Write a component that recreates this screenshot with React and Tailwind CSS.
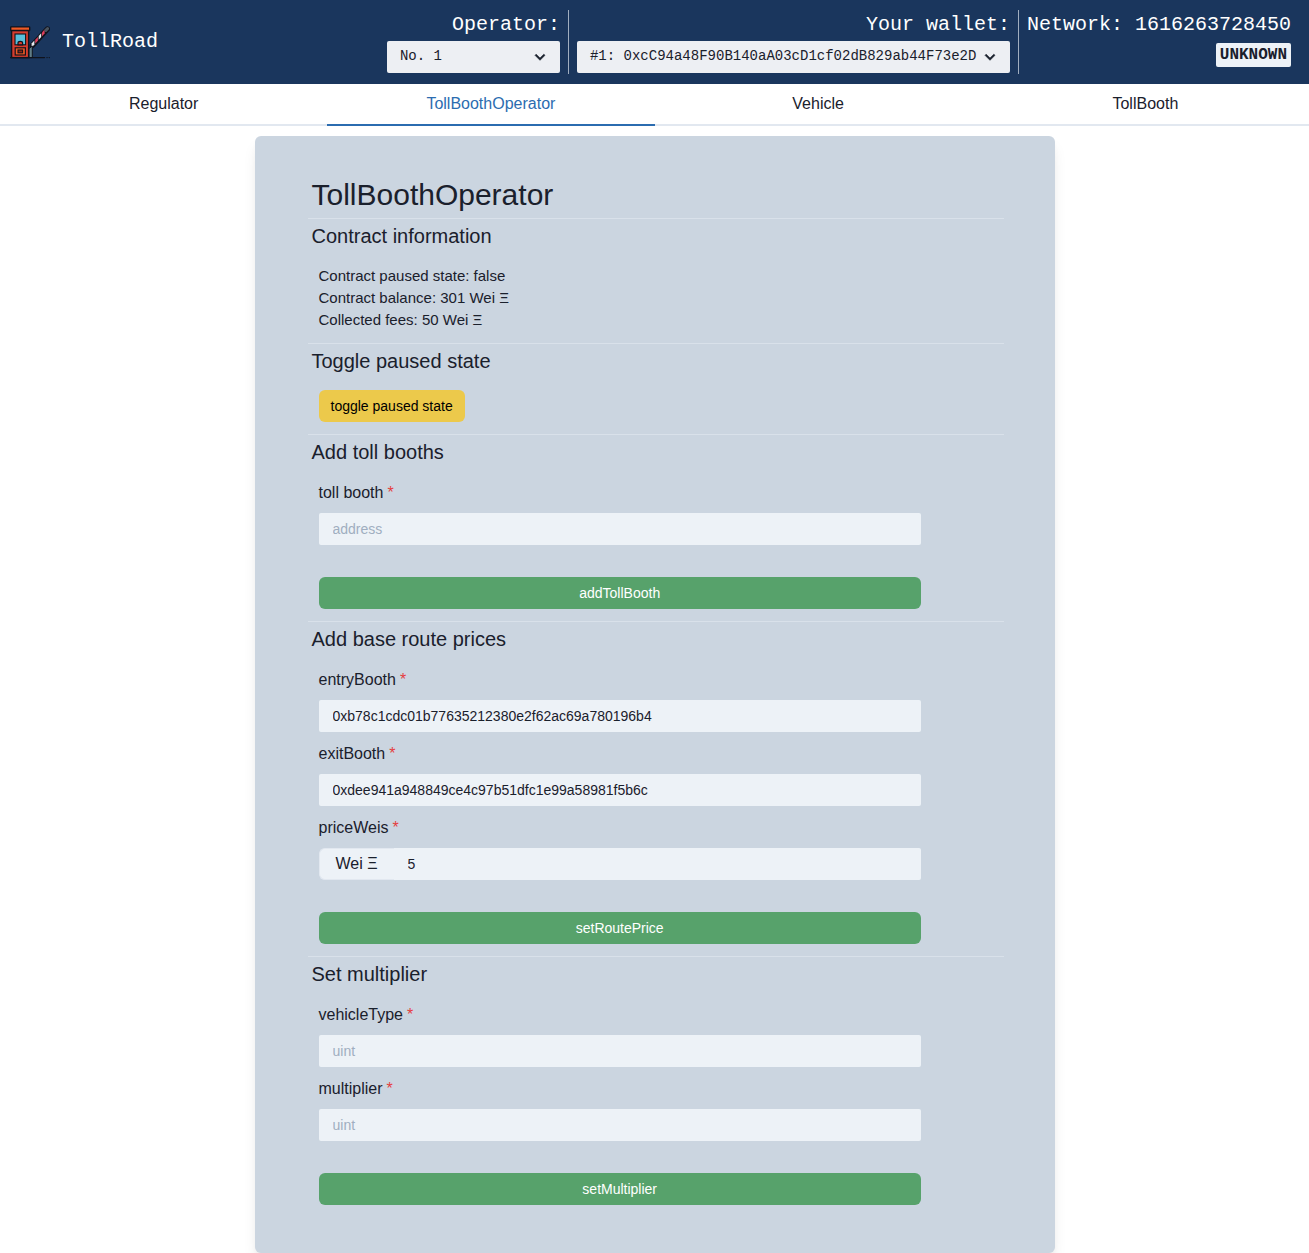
import React from "react";

function Logo() {
  return (
    <svg width="40" height="40" viewBox="0 0 40 40" className="-mt-1 block shrink-0">
      <path d="M22.4 25.4L37.4 9" stroke="#10131c" strokeWidth="5.4" strokeLinecap="round" />
      <path d="M21.6 23.6L24.4 20.6V24.4L21.6 27.4Z" fill="#e8eaf0" />
      <path d="M25.2 19.8L27.9 16.9V20.7L25.2 23.6Z" fill="#e0405e" />
      <path d="M28.7 16L31.2 13.3V17.1L28.7 19.8Z" fill="#e8eaf0" />
      <path d="M32 12.4L34.6 9.6V13.4L32 16.2Z" fill="#e0405e" />
      <path d="M35.8 10.4L37.6 8.6" stroke="#4a545f" strokeWidth="3" strokeLinecap="round" />
      <path d="M18.9 37.6V28.6L22.3 26V37.6Z" fill="#607d86" stroke="#10131c" strokeWidth="1" />
      <rect x="1.6" y="10.4" width="17" height="27.2" fill="#d63d2e" stroke="#10131c" strokeWidth="1.4" />
      <rect x="0.7" y="6.9" width="19" height="3.6" rx="0.6" fill="#f05a24" stroke="#10131c" strokeWidth="1.4" />
      <rect x="5" y="14" width="10.6" height="10.8" fill="#57bfdb" stroke="#10131c" strokeWidth="1.1" />
      <path d="M8 24.8V23Q8 21.4 10.3 21.4Q12.6 21.4 12.6 23V24.8Z" fill="#d63d2e" stroke="#10131c" strokeWidth="1.2" />
      <rect x="5.2" y="27.8" width="10.2" height="7.2" fill="#f05a24" stroke="#10131c" strokeWidth="1.2" />
      <rect x="8" y="30" width="4.6" height="2.8" fill="#8c2719" stroke="#10131c" strokeWidth="1.1" />
      <path d="M0.6 37.6H34.5M37 37.6H37.1M39.2 37.6H39.3" stroke="#10131c" strokeWidth="1.4" strokeLinecap="round" />
    </svg>
  );
}

function Select({ children, className }) {
  return (
    <div className={`flex h-8 items-center justify-between rounded-[2px] bg-[#edeff3] pl-[13px] pr-[10px] text-[14px] leading-5 text-[#1a202c] ${className}`}>
      <span className="-mt-0.5 whitespace-nowrap">{children}</span>
      <svg width="20" height="20" viewBox="0 0 24 24" className="-ml-2 shrink-0 fill-current">
        <path d="M16.59 8.59L12 13.17 7.41 8.59 6 10l6 6 6-6z" stroke="currentColor" strokeWidth="0.7" />
      </svg>
    </div>
  );
}

function Section({ title, children }) {
  return (
    <section className="border-t border-[#d9e1ea]">
      <h2 className="h-[34px] px-1 text-[20px] leading-[34px]">{title}</h2>
      <div className="py-3 pl-[11px]">{children}</div>
    </section>
  );
}

function Field({ label, placeholder, value, unit }) {
  return (
    <div>
      <label className="mb-2 block leading-6">
        {label}
        <span className="ml-1 text-[#e53e3e]">*</span>
      </label>
      <div className="flex h-8">
        {unit && (
          <span className="flex w-[75px] shrink-0 items-center whitespace-nowrap rounded-l-md border border-r-0 border-[#e2e8f0] bg-[#edf2f7] pl-4 leading-6">{unit}</span>
        )}
        <input
          className={`h-8 min-w-0 flex-1 bg-[#edf2f7] pl-[14px] text-[14px] placeholder-[#a0aec0] outline-none ${unit ? "rounded-r-[2px]" : "rounded-[2px]"}`}
          placeholder={placeholder}
          defaultValue={value}
        />
      </div>
    </div>
  );
}

function Form({ fields, action }) {
  return (
    <div className="w-[602.4px]">
      <div className="mb-8 flex flex-col gap-[10px]">
        {fields.map((f) => (
          <Field key={f.label} {...f} />
        ))}
      </div>
      <button className="block h-8 w-full rounded-md bg-[#57a26b] text-[14px] text-white">{action}</button>
    </div>
  );
}

const tabs = ["Regulator", "TollBoothOperator", "Vehicle", "TollBooth"];

export default function App() {
  return (
    <div className="bg-white font-['Liberation_Sans',sans-serif] text-[16px] leading-6 text-[#1a202c]">
      <header className="flex h-[84px] justify-between bg-[#1a365d] p-[10px] font-['Liberation_Mono',monospace] text-[20px] text-white">
        <div className="flex items-center gap-3">
          <Logo />
          <span className="leading-[30px]">TollRoad</span>
        </div>
        <div className="flex text-right leading-[30px]">
          <div className="border-r border-[#a0aec0] pr-2">
            <div className="mb-px">Operator:</div>
            <Select className="w-[173px]">No. 1</Select>
          </div>
          <div className="border-r border-[#a0aec0] px-2">
            <div className="mb-px">Your wallet:</div>
            <Select className="w-[433px]">#1: 0xcC94a48F90B140aA03cD1cf02dB829ab44F73e2D</Select>
          </div>
          <div className="flex flex-col items-end px-2">
            <div className="mb-[3px]">Network: 1616263728450</div>
            <span className="h-6 rounded-[2px] bg-[#edf2f7] px-1 text-[16px] font-bold leading-6 text-[#1a202c]">UNKNOWN</span>
          </div>
        </div>
      </header>
      <nav className="grid h-[42px] grid-cols-4 text-center">
        {tabs.map((t) => (
          <div key={t} className={`border-b-2 pt-2 ${t === "TollBoothOperator" ? "border-[#2b6cb0] text-[#2b6cb0]" : "border-[#e2e8f0]"}`}>
            {t}
          </div>
        ))}
      </nav>
      <main className="mx-auto mt-[10px] w-[800px] rounded-md bg-[#cbd5e0] pb-9 pl-[53px] pr-[51px] pt-9 shadow-[0_10px_15px_-3px_rgba(0,0,0,0.1),0_4px_6px_-2px_rgba(0,0,0,0.05)]">
        <h1 className="h-[46px] px-1 text-[30px] leading-[46px]">TollBoothOperator</h1>
        <Section title="Contract information">
          <div className="text-[15px] leading-[22px]">
            <p>Contract paused state: false</p>
            <p>Contract balance: 301 Wei Ξ</p>
            <p>Collected fees: 50 Wei Ξ</p>
          </div>
        </Section>
        <Section title="Toggle paused state">
          <button className="block h-8 rounded-md bg-[#ecc94b] px-3 text-[14px] text-black">toggle paused state</button>
        </Section>
        <Section title="Add toll booths">
          <Form fields={[{ label: "toll booth", placeholder: "address" }]} action="addTollBooth" />
        </Section>
        <Section title="Add base route prices">
          <Form
            fields={[
              { label: "entryBooth", value: "0xb78c1cdc01b77635212380e2f62ac69a780196b4" },
              { label: "exitBooth", value: "0xdee941a948849ce4c97b51dfc1e99a58981f5b6c" },
              { label: "priceWeis", value: "5", unit: "Wei Ξ" },
            ]}
            action="setRoutePrice"
          />
        </Section>
        <Section title="Set multiplier">
          <Form
            fields={[
              { label: "vehicleType", placeholder: "uint" },
              { label: "multiplier", placeholder: "uint" },
            ]}
            action="setMultiplier"
          />
        </Section>
      </main>
    </div>
  );
}
